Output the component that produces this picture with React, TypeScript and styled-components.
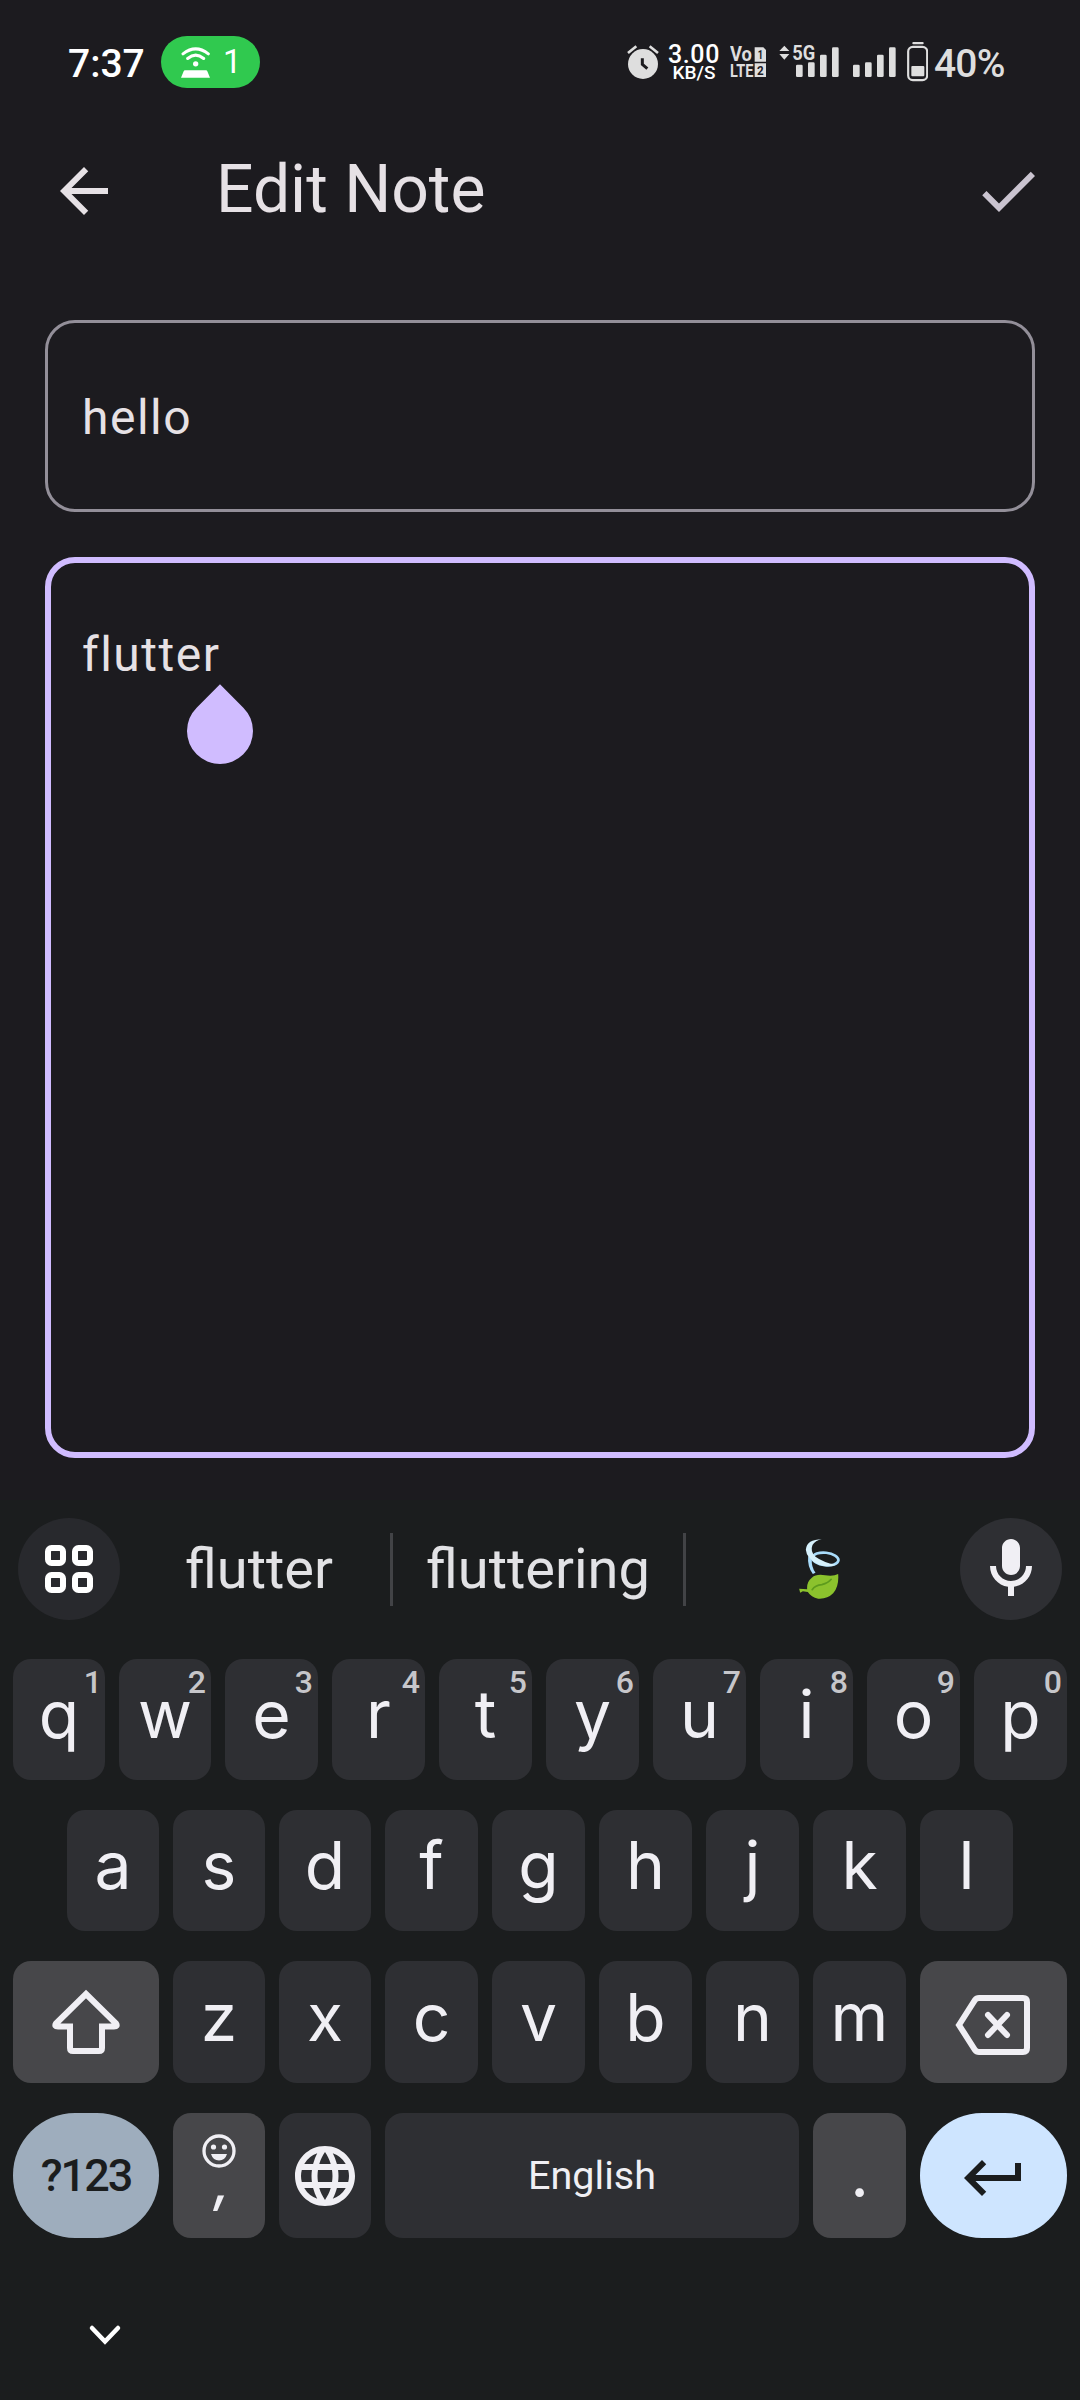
import React from 'react';
import styled, { createGlobalStyle, css } from 'styled-components';

const GlobalStyle = createGlobalStyle`
  html, body { margin: 0; padding: 0; background: #1c1b1f; }
  * { box-sizing: border-box; }
`;

const Screen = styled.div`
  width: 1080px;
  height: 2400px;
  display: flex;
  flex-direction: column;
  overflow: hidden;
  background: #1c1b1f;
  color: #e6e1e5;
  font-family: Roboto, 'Noto Sans', sans-serif;
`;

/* ---------- status bar ---------- */

const StatusBar = styled.header`
  height: 107px;
  padding: 17px 74px 0 68px;
  display: flex;
  align-items: center;
  justify-content: space-between;
`;

const StatusGroup = styled.div<{ $drop?: number }>`
  display: flex;
  align-items: center;
  height: 90px;
  margin-top: ${(p) => p.$drop ?? 0}px;
`;

const Clock = styled.span`
  width: 93px;
  padding-top: 3px;
  font-size: 39px;
  line-height: 46px;
  font-weight: 500;
  color: #fff;
`;

const HotspotPill = styled.span`
  display: flex;
  align-items: center;
  width: 99px;
  height: 52px;
  padding-left: 20px;
  gap: 13px;
  border-radius: 26px;
  background: #30c94f;
  color: #fff;
  font-size: 33px;
  line-height: 38px;
`;

const Speed = styled.span`
  display: flex;
  flex-direction: column;
  align-items: center;
  width: 54px;
  margin: 0 9px 0 8px;
  padding-bottom: 4px;
  color: #fff;
  font-weight: 500;
  font-size: 25px;
  line-height: 20px;
  letter-spacing: 0.6px;
`;

const SpeedUnit = styled.span`
  font-size: 19px;
  line-height: 16px;
  letter-spacing: 0;
`;

const Glyph = styled.svg<{ $gap?: number }>`
  display: block;
  flex: none;
  margin-left: ${(p) => p.$gap ?? 0}px;
`;

const BatteryLevel = styled.span`
  width: 72px;
  margin-left: 6px;
  padding-bottom: 2px;
  font-size: 39px;
  line-height: 46px;
  font-weight: 500;
  letter-spacing: -0.8px;
  color: #dedede;
`;

/* ---------- app ---------- */

const AppBar = styled.div`
  height: 168px;
  padding: 0 36px 0 48px;
  display: flex;
  align-items: center;
`;

const Title = styled.h1`
  flex: 1;
  margin: 0 0 3px 96px;
  font-size: 66px;
  line-height: 84px;
  font-weight: 400;
`;

const Form = styled.main`
  height: 1225px;
  padding: 45px 45px 0;
  display: flex;
  flex-direction: column;
  gap: 45px;
`;

const Field = styled.div<{ $focused?: boolean }>`
  border-radius: 30px;
  font-size: 48px;
  line-height: 72px;
  letter-spacing: 1.5px;
  ${(p) =>
    p.$focused
      ? css`
          height: 901px;
          border: 6px solid #d0bcff;
          padding: 56px 31px;
        `
      : css`
          height: 192px;
          border: 3px solid #938f99;
          padding: 59px 34px;
        `}
`;

const Typed = styled.span`
  position: relative;
  display: inline-block;
`;

const CursorHandle = styled.i`
  position: absolute;
  right: -33px;
  top: 79px;
  width: 66px;
  height: 66px;
  border-radius: 0 33px 33px 33px;
  background: #d0bcff;
  transform: rotate(45deg);
`;

/* ---------- keyboard ---------- */

const Keyboard = styled.section`
  flex: 1;
  padding: 18px 13px 0;
  background: #1b1d1e;
  display: flex;
  flex-direction: column;
`;

const SuggestionStrip = styled.div`
  height: 102px;
  margin: 0 5px 39px;
  display: flex;
  align-items: center;
`;

const RoundButton = styled.button<{ $bg: string }>`
  width: 102px;
  height: 102px;
  padding: 0;
  border: 0;
  border-radius: 50%;
  background: ${(p) => p.$bg};
  display: grid;
  place-items: center;
`;

const Suggestions = styled.div`
  flex: 1;
  height: 72px;
  padding: 0 8px;
  display: grid;
  grid-template-columns: 265px 293px 1fr;
`;

const Suggestion = styled.div<{ $divided?: boolean }>`
  display: flex;
  align-items: center;
  justify-content: center;
  padding-bottom: 1px;
  font-size: 56px;
  line-height: 72px;
  color: #e2e2e5;
  border-right: ${(p) => (p.$divided ? '3px solid #424346' : '0')};
`;

const KeyRows = styled.div`
  display: flex;
  flex-direction: column;
  gap: 30px;
`;

const KeyRow = styled.div<{ $inset?: number; $height: number }>`
  display: flex;
  gap: 14px;
  height: ${(p) => p.$height}px;
  padding: 0 ${(p) => p.$inset ?? 0}px;
`;

type Tone = 'letter' | 'special' | 'symbols' | 'enter';

const tones: Record<Tone, [string, string]> = {
  letter: ['#2e2f33', '#f0eff4'],
  special: ['#47474a', '#f0eff4'],
  symbols: ['#9eadbd', '#1b1d1e'],
  enter: ['#cee5ff', '#1b1d1e'],
};

const Key = styled.button<{ $tone?: Tone; $width?: number }>`
  position: relative;
  flex: ${(p) => (p.$width ? `0 0 ${p.$width}px` : '1 1 0')};
  min-width: 0;
  height: 100%;
  padding: 0 0 11px;
  border: 0;
  border-radius: ${(p) => (p.$tone === 'symbols' || p.$tone === 'enter' ? 62 : 18)}px;
  background: ${(p) => tones[p.$tone ?? 'letter'][0]};
  color: ${(p) => tones[p.$tone ?? 'letter'][1]};
  display: flex;
  align-items: center;
  justify-content: center;
  font-family: Inter, Roboto, sans-serif;
  font-size: 66px;
  line-height: 80px;
`;

const Hint = styled.span<{ $narrow: boolean }>`
  position: absolute;
  top: 5px;
  right: ${(p) => (p.$narrow ? 3 : 5)}px;
  font: 500 32px/36px Roboto, sans-serif;
  color: #c6c6ca;
`;

const IconKey = styled(Key)<{ $drop?: number }>`
  padding: ${(p) => p.$drop ?? 0}px 0 0;
`;

const WordKey = styled(Key)<{ $size: number; $weight?: number; $tight?: number }>`
  padding: 0;
  font-family: Roboto, sans-serif;
  font-size: ${(p) => p.$size}px;
  font-weight: ${(p) => p.$weight ?? 400};
  letter-spacing: ${(p) => p.$tight ?? 0}px;
`;

const CommaKey = styled(Key)`
  flex-direction: column;
  justify-content: flex-start;
  padding-top: 21px;
`;

const Comma = styled.span`
  margin: -26px 0 0 6px;
  height: 60px;
  font: italic 500 54px/80px Inter, sans-serif;
`;

const Dot = styled.span`
  padding-top: 10px;
  font-weight: 500;
  font-size: 60px;
`;

const NavBar = styled.nav`
  margin-top: 85px;
  padding-left: 74px;
`;

/* ---------- drawings ---------- */

const HotspotIcon = () => (
  <Glyph width="29" height="31" viewBox="0 0 87 92" fill="none" stroke="#fff" strokeWidth="9">
    <path d="M6 20Q44-10 82 20M20 34Q44 14 68 34" strokeLinecap="round" />
    <circle cx="44" cy="50" r="8" fill="#fff" stroke="none" />
    <path d="M12 69h63q3 0 4 3l8 20H0l8-20q1-3 4-3z" fill="#fff" stroke="none" />
  </Glyph>
);

const AlarmIcon = () => (
  <Glyph width="32" height="90" viewBox="51 0 96 270" fill="none">
    <circle cx="99" cy="132" r="45" fill="#dedede" />
    <path d="M54 99 79 79M144 99 119 79" stroke="#dedede" strokeWidth="8" />
    <path d="M97 115v18l15 13" stroke="#1c1b1f" strokeWidth="9" />
  </Glyph>
);

const VolteIcon = () => (
  <Glyph width="36" height="90" viewBox="360 0 108 270" fill="#dedede" fontFamily="Roboto" fontWeight="700">
    <text x="360" y="124" fontSize="60" textLength="66" lengthAdjust="spacingAndGlyphs">Vo</text>
    <text x="360" y="171" fontSize="57" textLength="70" lengthAdjust="spacingAndGlyphs">LTE</text>
    <path d="M434 82h26l8 8v35h-34zM434 130h34v41h-34z" />
    <g fill="#1c1b1f" fontSize="38">
      <text x="443" y="118" textLength="16" lengthAdjust="spacingAndGlyphs">1</text>
      <text x="441" y="164" textLength="20" lengthAdjust="spacingAndGlyphs">2</text>
    </g>
  </Glyph>
);

const barTops = [134, 127, 104, 82];

const Bars = ({ x }: { x: number }) => (
  <g>
    {barTops.map((top, i) => (
      <rect key={top} x={x + i * 36} y={top} width="20" height={171 - top} rx="4" />
    ))}
  </g>
);

const Signal5GIcon = () => (
  <Glyph $gap={13} width="60" height="90" viewBox="507 0 180 270" fill="#dedede">
    <path d="M508 93 523 77l15 16zM508 102h30l-15 17z" />
    <Bars x={558} />
    <text x="547" y="121" fontSize="60" fontFamily="Roboto" fontWeight="700" textLength="69" lengthAdjust="spacingAndGlyphs" stroke="#1c1b1f" strokeWidth="6" paintOrder="stroke">5G</text>
  </Glyph>
);

const SignalIcon = () => (
  <Glyph $gap={14} width="43" height="90" viewBox="730 0 129 270" fill="#dedede">
    <Bars x={730} />
  </Glyph>
);

const BatteryIcon = () => (
  <Glyph $gap={11} width="21" height="90" viewBox="890 0 63 270" fill="#dedede">
    <rect x="906" y="66" width="34" height="7" rx="3" />
    <rect x="893.500" y="80.500" width="57" height="100" rx="14" fill="none" stroke="#dedede" strokeWidth="6.500" />
    <rect x="903" y="138" width="39" height="31" rx="3" />
  </Glyph>
);

const MaterialIcon = ({ d, color }: { d: string; color: string }) => (
  <Glyph width="72" height="72" viewBox="0 0 24 24" fill={color}>
    <path d={d} />
  </Glyph>
);

const paths = {
  back: 'M20 11H7.830l5.590-5.590L12 4l-8 8 8 8 1.410-1.410L7.830 13H20v-2z',
  check: 'M9 16.170 4.830 12l-1.420 1.410L9 19 21 7l-1.410-1.410z',
  mic: 'M12 14c1.660 0 3-1.340 3-3V5c0-1.660-1.340-3-3-3S9 3.340 9 5v6c0 1.660 1.340 3 3 3zM17 11c0 2.760-2.240 5-5 5s-5-2.240-5-5H5c0 3.530 2.610 6.430 6 6.920V21h2v-3.080c3.390-.49 6-3.390 6-6.920h-2z',
  globe:
    'M11.990 2C6.470 2 2 6.480 2 12s4.470 10 9.990 10C17.520 22 22 17.520 22 12S17.520 2 11.990 2zm6.930 6h-2.950a15.650 15.650 0 0 0-1.380-3.560A8.030 8.030 0 0 1 18.920 8zM12 4.040c.83 1.200 1.480 2.530 1.910 3.960h-3.820c.43-1.430 1.080-2.760 1.910-3.960zM4.260 14C4.100 13.360 4 12.690 4 12s.1-1.360.26-2h3.380c-.08.66-.14 1.320-.14 2s.06 1.340.14 2H4.260zm.82 2h2.950c.32 1.250.78 2.450 1.380 3.560A7.990 7.990 0 0 1 5.080 16zm2.950-8H5.080a7.990 7.990 0 0 1 4.330-3.560A15.650 15.650 0 0 0 8.030 8zM12 19.960c-.83-1.200-1.480-2.530-1.910-3.960h3.820c-.43 1.430-1.080 2.760-1.910 3.960zM14.340 14H9.660c-.09-.66-.16-1.320-.16-2s.07-1.350.16-2h4.680c.09.65.16 1.320.16 2s-.07 1.340-.16 2zm.25 5.560c.6-1.110 1.060-2.310 1.380-3.560h2.950a8.030 8.030 0 0 1-4.330 3.560zM16.360 14c.08-.66.14-1.320.14-2s-.06-1.340-.14-2h3.380c.16.64.26 1.310.26 2s-.1 1.360-.26 2h-3.380z',
  enter: 'M19 7v4H5.830l3.580-3.590L8 6l-6 6 6 6 1.410-1.410L5.830 13H21V7z',
};

const AppsIcon = () => (
  <Glyph width="48" height="48" viewBox="0 0 48 48" fill="none" stroke="#fff" strokeWidth="6">
    {[3, 30].map((x) => [3, 30].map((y) => <rect key={`${x}-${y}`} x={x} y={y} width="15" height="15" rx="3.500" />))}
  </Glyph>
);

const LeafIcon = () => (
  <Glyph width="41" height="60" viewBox="48 30 122 180">
    <ellipse cx="127" cy="90" rx="39" ry="19" transform="rotate(6 127 90)" fill="none" stroke="#a9dcfb" strokeWidth="8" />
    <path d="M75 80Q72 112 89 135L97 131Q84 112 86 92z" fill="#a9dcfb" />
    <path d="M116 31Q71 31 68 62Q70 90 108 107Q138 117 158 107Q120 100 97 83Q80 68 88 48Q96 35 116 31z" fill="#d6f1fc" />
    <path d="M165 135Q168 172 150 193Q132 211 105 209Q84 205 74 189L59 187 51 191 48 179 72 181Q70 158 86 146Q100 134 126 139Q151 143 165 135z" fill="#8bc22d" />
    <path d="M87 182Q96 169 116 167Q136 162 144 151" fill="none" stroke="#5d9b1d" strokeWidth="5" strokeLinecap="round" />
  </Glyph>
);

const ShiftIcon = () => (
  <Glyph width="72" height="72" viewBox="0 0 72 72" fill="none" stroke="#f0eff4" strokeWidth="6">
    <path d="M36 8 66 37.500Q68 40.500 64 40.500H52V62Q52 65 49 65H23Q20 65 20 62V40.500H8Q4 40.500 6 37.500z" />
  </Glyph>
);

const BackspaceIcon = () => (
  <Glyph width="78" height="62" viewBox="0 0 78 62" fill="none" stroke="#f0eff4" strokeWidth="6">
    <path d="M4 31 20 6Q21.500 4 24 4H68Q72 4 72 8V54Q72 58 68 58H24Q21.500 58 20 56z" />
    <path d="M33 21 52 41M52 21 33 41" strokeLinecap="round" />
  </Glyph>
);

const SmileIcon = () => (
  <Glyph width="34" height="34" viewBox="0 0 34 34" fill="#f0eff4">
    <circle cx="17" cy="17" r="15" fill="none" stroke="#f0eff4" strokeWidth="3.300" />
    <circle cx="11.500" cy="13" r="2.600" />
    <circle cx="22.500" cy="13" r="2.600" />
    <path d="M9 20H25Q23 26.500 17 26.500T9 20z" />
  </Glyph>
);

const ChevronIcon = () => (
  <Glyph width="36" height="24" viewBox="0 0 36 24" fill="none" stroke="#fff" strokeWidth="4.500">
    <path d="M5 5 18 18.500 31 5" strokeLinecap="round" />
  </Glyph>
);

const topRow = 'qwertyuiop'.split('');
const homeRow = 'asdfghjkl'.split('');
const bottomRow = 'zxcvbnm'.split('');

export default function App() {
  return (
    <>
      <GlobalStyle />
      <Screen>
        <StatusBar>
          <StatusGroup>
            <Clock>7:37</Clock>
            <HotspotPill>
              <HotspotIcon />1
            </HotspotPill>
          </StatusGroup>
          <StatusGroup $drop={6}>
            <AlarmIcon />
            <Speed>
              3.00
              <SpeedUnit>KB/S</SpeedUnit>
            </Speed>
            <VolteIcon />
            <Signal5GIcon />
            <SignalIcon />
            <BatteryIcon />
            <BatteryLevel>40%</BatteryLevel>
          </StatusGroup>
        </StatusBar>

        <AppBar>
          <MaterialIcon d={paths.back} color="#e6e1e5" />
          <Title>Edit Note</Title>
          <MaterialIcon d={paths.check} color="#cac4d0" />
        </AppBar>

        <Form>
          <Field>hello</Field>
          <Field $focused>
            <Typed>
              flutter
              <CursorHandle />
            </Typed>
          </Field>
        </Form>

        <Keyboard>
          <SuggestionStrip>
            <RoundButton $bg="#28292d">
              <AppsIcon />
            </RoundButton>
            <Suggestions>
              <Suggestion $divided>flutter</Suggestion>
              <Suggestion $divided>fluttering</Suggestion>
              <Suggestion>
                <LeafIcon />
              </Suggestion>
            </Suggestions>
            <RoundButton $bg="#2e2f33">
              <MaterialIcon d={paths.mic} color="#f0eff4" />
            </RoundButton>
          </SuggestionStrip>

          <KeyRows>
            <KeyRow $height={121}>
              {topRow.map((letter, i) => (
                <Key key={letter} $width={i < 2 ? 92 : 93}>
                  {letter}
                  <Hint $narrow={i === 0}>{(i + 1) % 10}</Hint>
                </Key>
              ))}
            </KeyRow>
            <KeyRow $height={121} $inset={54}>
              {homeRow.map((letter, i) => (
                <Key key={letter} $width={i < 3 ? 92 : 93}>
                  {letter}
                </Key>
              ))}
            </KeyRow>
            <KeyRow $height={122}>
              <IconKey $tone="special" $width={146}>
                <ShiftIcon />
              </IconKey>
              {bottomRow.map((letter, i) => (
                <Key key={letter} $width={i < 2 ? 92 : 93}>
                  {letter}
                </Key>
              ))}
              <IconKey $tone="special" $width={147} $drop={6}>
                <BackspaceIcon />
              </IconKey>
            </KeyRow>
            <KeyRow $height={125}>
              <WordKey $tone="symbols" $width={146} $size={45} $weight={500} $tight={-2}>
                ?123
              </WordKey>
              <CommaKey $tone="special" $width={92}>
                <SmileIcon />
                <Comma>,</Comma>
              </CommaKey>
              <IconKey $width={92}>
                <MaterialIcon d={paths.globe} color="#f0eff4" />
              </IconKey>
              <WordKey $size={39.5}>English</WordKey>
              <Key $tone="special" $width={93}>
                <Dot>.</Dot>
              </Key>
              <IconKey $tone="enter" $width={147} $drop={5}>
                <MaterialIcon d={paths.enter} color="#1b1d1e" />
              </IconKey>
            </KeyRow>
          </KeyRows>

          <NavBar>
            <ChevronIcon />
          </NavBar>
        </Keyboard>
      </Screen>
    </>
  );
}
